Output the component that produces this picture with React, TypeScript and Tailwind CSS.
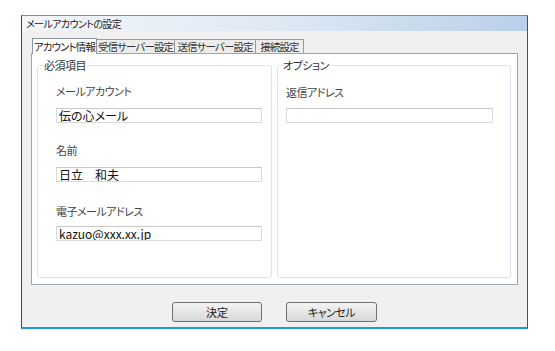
import React from 'react';

const jp = "font-['Meiryo_UI','Noto_Sans_CJK_JP',sans-serif] [font-feature-settings:'palt']";

const tabs = [
  { label: 'アカウント情報', w: 'w-[65px]', active: true },
  { label: '受信サーバー設定', w: 'w-[79px]', active: false },
  { label: '送信サーバー設定', w: 'w-[82px]', active: false },
  { label: '接続設定', w: 'w-[49px]', active: false },
];

function Field({ label, value, top, gap, width }) {
  return (
    <div className={`flex flex-col ${top}`}>
      <span className="text-[11px] leading-[13px] text-[#444] tracking-[-0.5px] whitespace-nowrap">{label}</span>
      <input
        readOnly
        defaultValue={value}
        className={`${gap} ${width} h-[15px] border border-[#dadada] border-t-[#c9c9c9] bg-white px-[2px] text-[12px] leading-[13px] text-[#111] outline-none`}
      />
    </div>
  );
}

export default function App() {
  return (
    <div className={`min-h-screen bg-white pt-[15px] pl-[21px] ${jp}`}>
      <div className="w-[507px] h-[314px] flex flex-col bg-[#f0f0f0] border-l border-l-[#3e4652] border-r border-r-[#1d5f86] border-t border-t-[#7f8d9a] border-b-2 border-b-[#1f9ad6]">
        {/* title bar */}
        <div className="h-[15px] flex items-center pl-[4px] bg-gradient-to-r from-[#f3f6fa] via-[#dfe9f4] to-[#b9d0ea]">
          <span className="text-[10px] leading-[12px] text-[#222] tracking-[-0.6px] whitespace-nowrap">メールアカウントの設定</span>
        </div>

        <div className="flex-1 flex flex-col px-[9px] pt-[6px]">
          {/* tabs */}
          <div className="flex items-end h-[16px] pl-[1px]">
            {tabs.map((t) => (
              <div
                key={t.label}
                className={`${t.w} flex items-center justify-center overflow-hidden whitespace-nowrap border border-b-0 text-[10.5px] leading-[13px] tracking-[-0.9px] ${
                  t.active
                    ? 'h-[16px] bg-white border-[#8d97a3] text-[#222] relative top-[1px] z-10'
                    : 'h-[14px] bg-[#ececec] border-[#959ca5] -ml-[1px] text-[#333]'
                }`}
              >
                {t.label}
              </div>
            ))}
          </div>

          {/* tab panel */}
          <div className="h-[232px] flex gap-[5px] bg-white border border-[#9ea6ae] px-[5px] pt-[5px] pb-[5px]">
            <fieldset className="w-[235px] h-[219px] border border-[#dce3ea] rounded-[3px] pl-[18px]">
              <legend className="ml-[-13px] px-[1px] text-[11px] leading-[13px] text-[#333] tracking-[-0.5px]">必須項目</legend>
              <Field label="メールアカウント" value="伝の心メール" top="mt-[13px]" gap="mt-[10px]" width="w-[206px]" />
              <Field label="名前" value="日立　和夫" top="mt-[21px]" gap="mt-[10px]" width="w-[206px]" />
              <Field label="電子メールアドレス" value="kazuo@xxx.xx.jp" top="mt-[23px]" gap="mt-[8px]" width="w-[206px]" />
            </fieldset>
            <fieldset className="w-[234px] h-[219px] border border-[#dce3ea] rounded-[3px] pl-[8px]">
              <legend className="ml-[-4px] px-[1px] text-[11px] leading-[13px] text-[#333] tracking-[-0.5px]">オプション</legend>
              <Field label="返信アドレス" value="" top="mt-[14px]" gap="mt-[9px]" width="w-[207px]" />
            </fieldset>
          </div>

          {/* buttons */}
          <div className="flex justify-center gap-[24px] mt-[17px]">
            <button className="w-[90px] h-[20px] rounded-[3px] border border-[#707070] bg-gradient-to-b from-[#f4f4f4] to-[#d9d9d9] text-[11px] text-[#222]">
              決定
            </button>
            <button className="w-[91px] h-[20px] rounded-[3px] border border-[#707070] bg-gradient-to-b from-[#f4f4f4] to-[#d9d9d9] text-[11px] text-[#222] tracking-[-0.5px]">
              キャンセル
            </button>
          </div>
        </div>
      </div>
    </div>
  );
}
